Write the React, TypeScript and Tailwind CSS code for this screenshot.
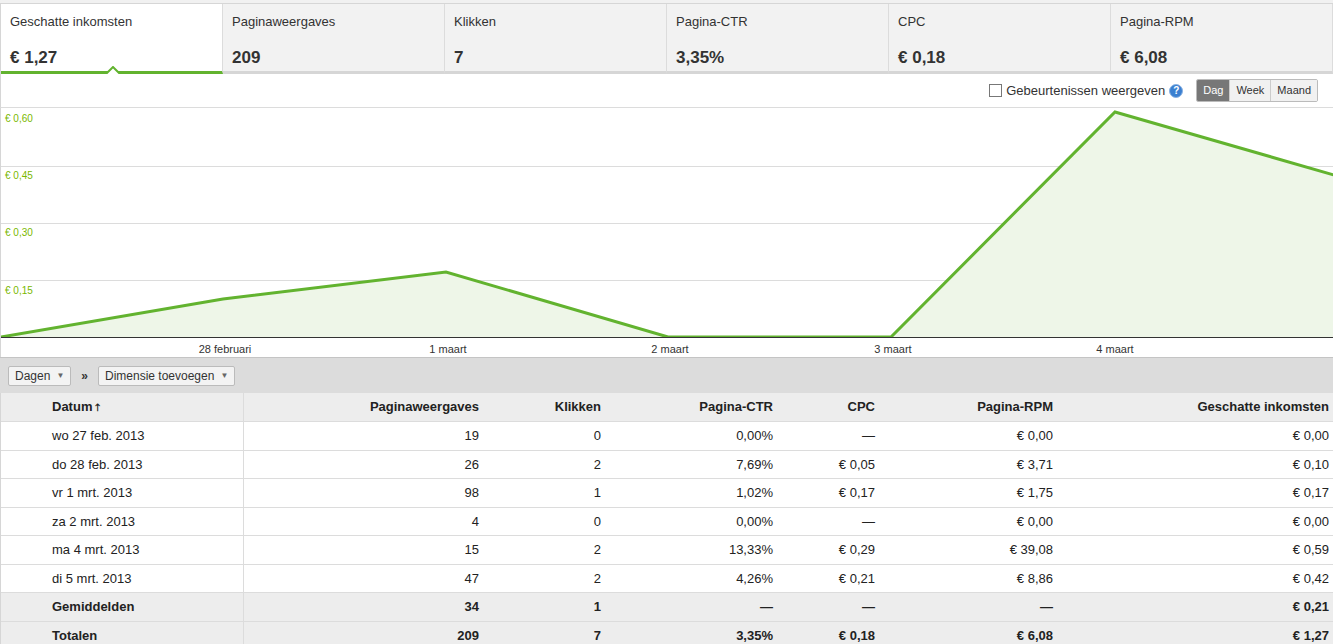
const tabs = [
  ["Geschatte inkomsten", "€ 1,27"],
  ["Paginaweergaves", "209"],
  ["Klikken", "7"],
  ["Pagina-CTR", "3,35%"],
  ["CPC", "€ 0,18"],
  ["Pagina-RPM", "€ 6,08"],
];

const rows = [
  ["wo 27 feb. 2013", "19", "0", "0,00%", "—", "€ 0,00", "€ 0,00"],
  ["do 28 feb. 2013", "26", "2", "7,69%", "€ 0,05", "€ 3,71", "€ 0,10"],
  ["vr 1 mrt. 2013", "98", "1", "1,02%", "€ 0,17", "€ 1,75", "€ 0,17"],
  ["za 2 mrt. 2013", "4", "0", "0,00%", "—", "€ 0,00", "€ 0,00"],
  ["ma 4 mrt. 2013", "15", "2", "13,33%", "€ 0,29", "€ 39,08", "€ 0,59"],
  ["di 5 mrt. 2013", "47", "2", "4,26%", "€ 0,21", "€ 8,86", "€ 0,42"],
];

const footer = [
  ["Gemiddelden", "34", "1", "—", "—", "—", "€ 0,21"],
  ["Totalen", "209", "7", "3,35%", "€ 0,18", "€ 6,08", "€ 1,27"],
];

const cols = "grid grid-cols-[243px_235px_122px_172px_102px_178px_276px]";

function Row({ cells, bold, bg }: { cells: string[]; bold?: boolean; bg: string }) {
  return (
    <div className={`${cols} ${bg} h-[28.5px] items-center border-b border-[#dcdcdc] text-[13px] ${bold ? "font-bold" : ""}`}>
      {cells.map((c, i) =>
        i === 0 ? (
          <div key={i} className="h-full flex items-center pl-[51px] border-r border-[#dcdcdc]">{c}</div>
        ) : (
          <div key={i} className="text-right pr-0">{c}</div>
        )
      )}
    </div>
  );
}

export default function App() {
  const pts: [number, number][] = [[0, 229], [222, 191], [445, 164], [667, 229], [890, 229], [1114, 4], [1333, 67]];
  const line = pts.map((p) => p.join(",")).join(" ");
  return (
    <div className="w-[1333px] h-[644px] bg-white text-[#222] overflow-hidden" style={{ fontFamily: "Arial, 'Liberation Sans', sans-serif" }}>
      <div className="h-[4px] bg-[#f1f1f1] border-b border-[#d6d6d6]" />
      <div className="flex h-[70px] border-l border-[#d6d6d6]">
        {tabs.map(([l, v], i) => (
          <div key={l} className={`relative flex-1 px-[9px] pt-[8px] border-r border-[#dcdcdc] ${i === 0 ? "bg-white border-b-[3px] border-b-[#62b32f]" : "bg-[#f2f2f2] border-b-[3px] border-b-[#d6d6d6]"}`}>
            <div className="text-[13px] text-[#333]">{l}</div>
            <div className="mt-[13px] text-[17px] font-bold text-[#333]">{v}</div>
            {i === 0 && (
              <svg className="absolute left-[105px] bottom-[-3px]" width="14" height="8" viewBox="0 0 14 8">
                <path d="M0 8 L7 1 L14 8" fill="white" stroke="#62b32f" strokeWidth="2" />
              </svg>
            )}
          </div>
        ))}
      </div>
      <div className="h-[34px] flex items-center justify-end pr-[15px] border-l border-[#d6d6d6] border-b border-b-[#dcdcdc]">
        <span className="w-[13px] h-[13px] border border-[#777] bg-white mr-[4px]" />
        <span className="text-[13px] text-[#333]">Gebeurtenissen weergeven</span>
        <span className="ml-[4px] w-[14px] h-[14px] rounded-full bg-[#3a7fd0] border border-[#8ab2e3] text-white text-[10px] font-bold flex items-center justify-center">?</span>
        <div className="ml-[13px] flex text-[11px] border border-[#bbb] rounded-[2px] overflow-hidden">
          <span className="px-[6px] py-[2px] bg-[#777] text-white">Dag</span>
          <span className="px-[6px] py-[2px] bg-[#f1f1f1] text-[#333] border-l border-[#ccc]">Week</span>
          <span className="px-[6px] py-[2px] bg-[#f1f1f1] text-[#333] border-l border-[#ccc]">Maand</span>
        </div>
      </div>
      <div className="relative h-[230px] border-l border-[#d6d6d6]">
        <svg className="absolute inset-0" width="1333" height="230" viewBox="0 0 1333 230">
          {[58, 115, 172].map((y) => (
            <line key={y} x1="0" x2="1333" y1={y + 0.5} y2={y + 0.5} stroke="#dcdcdc" />
          ))}
          <polygon points={`0,229 ${line} 1333,229`} fill="#eef6e8" />
          <polyline points={line} fill="none" stroke="#62b32f" strokeWidth="3" strokeLinejoin="miter" />
          <line x1="0" x2="1333" y1="229.5" y2="229.5" stroke="#333" />
        </svg>
        {[["€ 0,60", 3], ["€ 0,45", 60], ["€ 0,30", 117], ["€ 0,15", 175]].map(([t, y]) => (
          <div key={t as string} className="absolute left-[4px] text-[10px] text-[#7ab800]" style={{ top: y as number }}>{t}</div>
        ))}
      </div>
      <div className="relative h-[19px] border-l border-[#d6d6d6] text-[11px] text-[#333]">
        {[["28 februari", 224], ["1 maart", 447], ["2 maart", 669], ["3 maart", 892], ["4 maart", 1114]].map(([t, x]) => (
          <span key={t as string} className="absolute top-[3px] -translate-x-1/2" style={{ left: x as number }}>{t}</span>
        ))}
      </div>
      <div className="h-[36px] bg-[#dcdcdc] border-t border-[#c4c4c4] flex items-center pl-[8px] gap-[10px] text-[12px] text-[#333]">
        <span className="flex items-center gap-[6px] h-[20px] px-[6px] bg-[#f3f3f3] border border-[#bbb] rounded-[2px]">Dagen <span className="text-[8px] text-[#666]">▼</span></span>
        <span className="font-bold">»</span>
        <span className="flex items-center gap-[6px] h-[20px] px-[6px] bg-[#f3f3f3] border border-[#bbb] rounded-[2px]">Dimensie toevoegen <span className="text-[8px] text-[#666]">▼</span></span>
      </div>
      <div className="border-l border-[#d6d6d6]">
        <div className={`${cols} h-[29px] items-center bg-[#ededed] text-[13px] font-bold border-b border-[#dcdcdc]`}>
          <div className="h-full flex items-center pl-[51px] border-r border-[#dcdcdc]">Datum <span className="ml-[3px] text-[10px]">🡑</span></div>
          {["Paginaweergaves", "Klikken", "Pagina-CTR", "CPC", "Pagina-RPM", "Geschatte inkomsten"].map((h) => (
            <div key={h} className="text-right">{h}</div>
          ))}
        </div>
        {rows.map((r) => <Row key={r[0]} cells={r} bg="bg-white" />)}
        {footer.map((r) => <Row key={r[0]} cells={r} bold bg="bg-[#ededed]" />)}
      </div>
    </div>
  );
}
